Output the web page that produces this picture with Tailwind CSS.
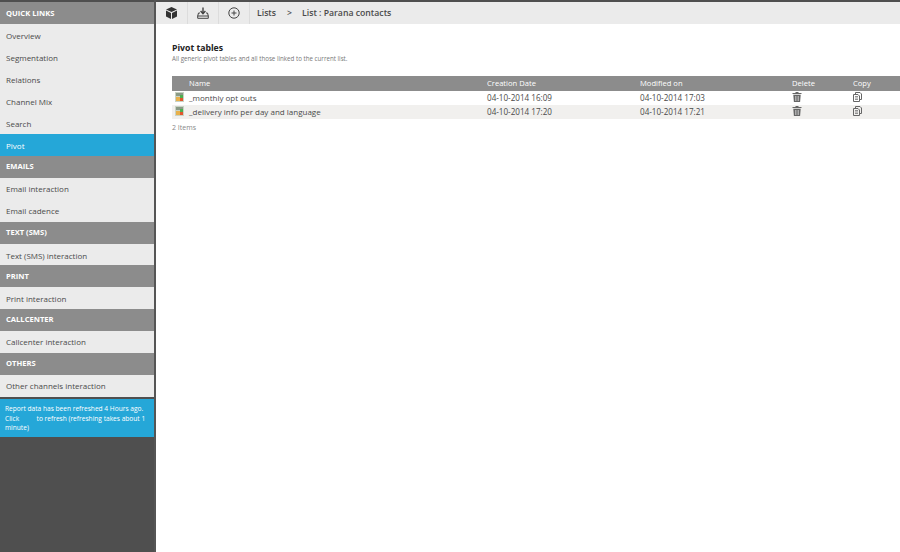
<!DOCTYPE html>
<html lang="en">
<head>
    <meta charset="UTF-8">
    <title>Pivot tables</title>
    <script src="https://cdn.jsdelivr.net/npm/@tailwindcss/browser@4"></script>
</head>
<body class="w-[900px] h-[552px] overflow-hidden bg-white flex font-['Open_Sans',sans-serif] text-[8px] text-[#4a4a4a]">

    <!-- Sidebar -->
    <aside class="w-[156px] h-full shrink-0 bg-[#4f4f4f] pt-[2px] border-r-2 border-[#555]">
        <div class="h-[22px] flex items-center px-[6px] pt-[2px] bg-[#8c8c8c] text-white font-bold text-[7.6px]">QUICK LINKS</div>
        <div class="h-[22px] flex items-center px-[6px] pt-[2px] bg-[#ebebeb]">Overview</div>
        <div class="h-[22px] flex items-center px-[6px] pt-[2px] bg-[#ebebeb]">Segmentation</div>
        <div class="h-[22px] flex items-center px-[6px] pt-[2px] bg-[#ebebeb]">Relations</div>
        <div class="h-[22px] flex items-center px-[6px] pt-[2px] bg-[#ebebeb]">Channel Mix</div>
        <div class="h-[22px] flex items-center px-[6px] pt-[2px] bg-[#ebebeb]">Search</div>
        <div class="h-[22px] flex items-center px-[6px] pt-[2px] bg-[#25a7d8] text-white">Pivot</div>
        <div class="h-[22px] flex items-center px-[6px] bg-[#8c8c8c] text-white font-bold text-[7.6px]">EMAILS</div>
        <div class="h-[22px] flex items-center px-[6px] bg-[#ebebeb]">Email interaction</div>
        <div class="h-[22px] flex items-center px-[6px] bg-[#ebebeb]">Email cadence</div>
        <div class="h-[22px] flex items-center px-[6px] bg-[#8c8c8c] text-white font-bold text-[7.6px]">TEXT (SMS)</div>
        <div class="h-[21px] flex items-center px-[6px] pt-[2px] bg-[#ebebeb]">Text (SMS) interaction</div>
        <div class="h-[22px] flex items-center px-[6px] pt-[2px] bg-[#8c8c8c] text-white font-bold text-[7.6px]">PRINT</div>
        <div class="h-[22px] flex items-center px-[6px] pt-[2px] bg-[#ebebeb]">Print interaction</div>
        <div class="h-[22px] flex items-center px-[6px] bg-[#8c8c8c] text-white font-bold text-[7.6px]">CALLCENTER</div>
        <div class="h-[22px] flex items-center px-[6px] bg-[#ebebeb]">Callcenter interaction</div>
        <div class="h-[22px] flex items-center px-[6px] bg-[#8c8c8c] text-white font-bold text-[7.6px]">OTHERS</div>
        <div class="h-[22px] flex items-center px-[6px] bg-[#ebebeb]">Other channels interaction</div>
        <div class="mt-[2px] h-[38px] px-[5px] pt-[5px] bg-[#25a7d8] text-white text-[6.6px] leading-[9.5px]">
            Report data has been refreshed 4 Hours ago.<br>
            Click <span class="inline-block w-[14px]"></span> to refresh (refreshing takes about 1 minute)
        </div>
    </aside>

    <!-- Main -->
    <main class="flex-1 min-w-0 flex flex-col">
        <div class="h-[2px] bg-[#4f4f4f]"></div>
        <div class="h-[22px] bg-[#ebebeb] flex items-center">
            <div class="w-[32px] h-full flex items-center justify-center border-r border-[#dcdcdc]">
                <svg width="11" height="12" viewBox="0 0 11 12"><path fill="#333" d="M5.5 0 11 2.5 5.5 5 0 2.5ZM0 3.6 5 5.9V12L0 9.5ZM11 3.6 6 5.9V12L11 9.5Z"/></svg>
            </div>
            <div class="w-[31px] h-full flex items-center justify-center border-r border-[#dcdcdc] pr-[1px]">
                <svg width="12" height="12" viewBox="0 0 12 12" fill="none" stroke="#444"><path d="M6 0.5V6M3.6 4 6 6.6 8.4 4" stroke-width="1.4"/><path d="M3 6H1.5L0.7 9H11.3L10.5 6H9M0.7 9V11.3H11.3V9" stroke-width="1"/></svg>
            </div>
            <div class="w-[31px] h-full flex items-center justify-center border-r border-[#dcdcdc]">
                <svg width="12" height="12" viewBox="0 0 12 12" fill="none" stroke="#444"><circle cx="6" cy="6" r="5.2"/><path d="M6 3.5V8.5M3.5 6H8.5"/></svg>
            </div>
            <span class="ml-[7px] pt-[2px] font-semibold text-[8.7px]">Lists</span>
            <span class="ml-[11px] pt-[2px] font-semibold text-[8.7px]">&gt;</span>
            <span class="ml-[10px] pt-[2px] font-semibold text-[8.7px]">List : Parana contacts</span>
        </div>

        <div class="pl-[16px] pt-[18px]">
            <h1 class="text-[8.7px] leading-[12px] font-bold text-[#222]">Pivot tables</h1>
            <p class="text-[6.2px] leading-[9px] text-[#777]">All generic pivot tables and all those linked to the current list.</p>

            <table class="mt-[13px] w-full table-fixed border-collapse">
                <thead>
                    <tr class="h-[15px] bg-[#8c8c8c] text-white text-left text-[7.6px]">
                        <th class="w-[315px] pl-[17px] font-normal">Name</th>
                        <th class="w-[153px] font-normal">Creation Date</th>
                        <th class="w-[152px] font-normal">Modified on</th>
                        <th class="w-[61px] font-normal">Delete</th>
                        <th class="font-normal">Copy</th>
                    </tr>
                </thead>
                <tbody>
                    <tr class="h-[14px]">
                        <td class="pl-[3px]">
                            <div class="flex items-center gap-[5px]">
                                <svg class="-mt-[2px]" width="9" height="10" viewBox="0 0 9 10"><rect width="9" height="10" fill="#c9d3c4"/><rect x="1" y="1" width="7" height="3" fill="#8a9a86"/><rect x="1" y="5" width="4" height="4" fill="#e8b04a"/><rect x="5" y="3" width="3" height="3" fill="#4caf50"/><rect x="5" y="6" width="3" height="3" fill="#e2552d"/></svg>
                                <span>_monthly opt outs</span>
                            </div>
                        </td>
                        <td class="text-[8.1px]">04-10-2014 16:09</td>
                        <td class="text-[8.1px]">04-10-2014 17:03</td>
                        <td>
                            <svg class="-mt-[2px]" width="10" height="10" viewBox="0 0 9 10"><path fill="#666" d="M3 0H6V1H9V2H0V1H3ZM0.8 2.7H8.2L7.6 10H1.4Z"/><path stroke="#ddd" stroke-width=".6" d="M3 4V9M4.5 4V9M6 4V9"/></svg>
                        </td>
                        <td>
                            <svg class="-mt-[2px]" width="9" height="10" viewBox="0 0 9 10" fill="none" stroke="#666"><path d="M2.5 2V.5H7L8.5 2V7.5H7"/><path d="M.5 2.5H5L6.5 4V9.5H.5Z"/><path d="M2 4.5H5M2 6H5M2 7.5H5" stroke-width=".7"/></svg>
                        </td>
                    </tr>
                    <tr class="h-[14px] bg-[#f1f0ee]">
                        <td class="pl-[3px]">
                            <div class="flex items-center gap-[5px]">
                                <svg class="-mt-[2px]" width="9" height="10" viewBox="0 0 9 10"><rect width="9" height="10" fill="#c9d3c4"/><rect x="1" y="1" width="7" height="3" fill="#8a9a86"/><rect x="1" y="5" width="4" height="4" fill="#e8b04a"/><rect x="5" y="3" width="3" height="3" fill="#4caf50"/><rect x="5" y="6" width="3" height="3" fill="#e2552d"/></svg>
                                <span>_delivery info per day and language</span>
                            </div>
                        </td>
                        <td class="text-[8.1px]">04-10-2014 17:20</td>
                        <td class="text-[8.1px]">04-10-2014 17:21</td>
                        <td>
                            <svg class="-mt-[2px]" width="10" height="10" viewBox="0 0 9 10"><path fill="#666" d="M3 0H6V1H9V2H0V1H3ZM0.8 2.7H8.2L7.6 10H1.4Z"/><path stroke="#ddd" stroke-width=".6" d="M3 4V9M4.5 4V9M6 4V9"/></svg>
                        </td>
                        <td>
                            <svg class="-mt-[2px]" width="9" height="10" viewBox="0 0 9 10" fill="none" stroke="#666"><path d="M2.5 2V.5H7L8.5 2V7.5H7"/><path d="M.5 2.5H5L6.5 4V9.5H.5Z"/><path d="M2 4.5H5M2 6H5M2 7.5H5" stroke-width=".7"/></svg>
                        </td>
                    </tr>
                </tbody>
            </table>
            <p class="mt-[4px] text-[7px] leading-[9px] text-[#888]">2 Items</p>
        </div>
    </main>

</body>
</html>
